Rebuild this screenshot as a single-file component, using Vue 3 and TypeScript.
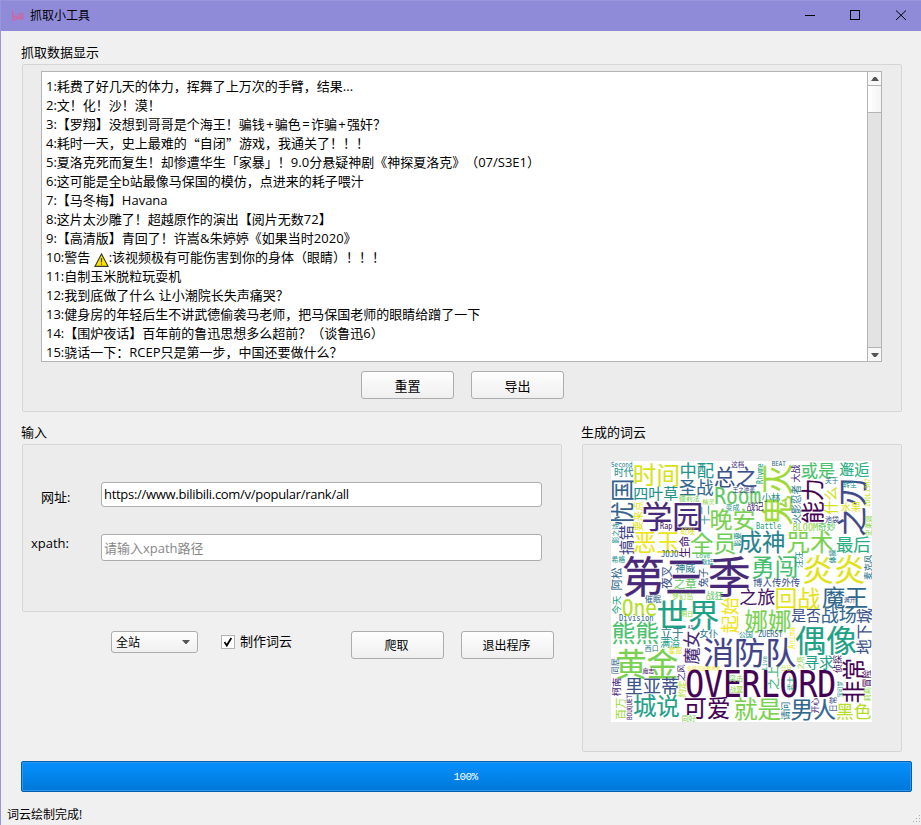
<script setup lang="ts">
import { ref } from 'vue'

interface Row {
  text: string
  icon?: boolean
  tail?: string
}

const rows: Row[] = [
  { text: '1:耗费了好几天的体力，挥舞了上万次的手臂，结果...' },
  { text: '2:文！化！沙！漠！' },
  { text: '3:【罗翔】没想到哥哥是个海王！骗钱+骗色=诈骗+强奸？' },
  { text: '4:耗时一天，史上最难的“自闭”游戏，我通关了！！！' },
  { text: '5:夏洛克死而复生！却惨遭华生「家暴」！9.0分悬疑神剧《神探夏洛克》（07/S3E1）' },
  { text: '6:这可能是全b站最像马保国的模仿，点进来的耗子喂汁' },
  { text: '7:【马冬梅】Havana' },
  { text: '8:这片太沙雕了！超越原作的演出【阅片无数72】' },
  { text: '9:【高清版】青回了！许嵩&朱婷婷《如果当时2020》' },
  { text: '10:警告 ', icon: true, tail: ':该视频极有可能伤害到你的身体（眼睛）！！！' },
  { text: '11:自制玉米脱粒玩耍机' },
  { text: '12:我到底做了什么 让小潮院长失声痛哭？' },
  { text: '13:健身房的年轻后生不讲武德偷袭马老师，把马保国老师的眼睛给蹭了一下' },
  { text: '14:【围炉夜话】百年前的鲁迅思想多么超前？（谈鲁迅6）' },
  { text: '15:骁话一下：RCEP只是第一步，中国还要做什么？' },
]

// Quotes take a full-width cell; + = & take a wider one than the Latin font gives them.
const pieces = (text: string) =>
  text
    .split(/([“”+=&])/)
    .filter(Boolean)
    .map((part) => ({
      part,
      kind: /^[“”]$/.test(part) ? 'quote' : /^[+=&]$/.test(part) ? 'sign' : '',
    }))

const url = ref('https://www.bilibili.com/v/popular/rank/all')
const xpath = ref('')
const makeCloud = ref(true)

// [text, start along the writing direction, centre across it, length, colour, upright?]
type Entry = [string, number, number, number, string, boolean?]

const entries: Entry[] = [
  ['Second', 0, 3, 21.5, '#26828e'],
  ['时代', 3.3, 11.7, 18.7, '#26928a'],
  ['时间', 22.7, 14, 45.5, '#d8e219'],
  ['中配', 69, 9.3, 33.3, '#1f958b'],
  ['总之', 103.5, 16, 42, '#3b528b'],
  ['这档', 120.5, 4, 12.5, '#482878'],
  ['忧国', 63.3, 11, 45, '#34618d', true],
  ['四叶草', 22.7, 31.8, 44, '#21918c'],
  ['圣战', 68.7, 26.7, 33.3, '#31688e'],
  ['Room', 103.3, 34.8, 47, '#5ec962'],
  ['德莉法', 68, 37.3, 20.7, '#73d055'],
  ['精灵', 91.7, 40.7, 11.5, '#90d743'],
  ['变成', 114.7, 46, 13.5, '#21918c'],
  ['王之逆袭', 122, 28.5, 21.5, '#3e4a89'],
  ['学园', 31.3, 54.8, 60, '#482878'],
  ['要来点', 70, 26.7, 29.3, '#dfe318', true],
  ['搞错', 93.3, 15, 28.7, '#414487', true],
  ['影之诗', 82.3, 4, 20, '#21918c', true],
  ['Rap', 49, 65, 12.5, '#481467'],
  ['恶玉', 22.7, 80.7, 45.3, '#ece51b'],
  ['虹咲', 69.7, 70, 14.3, '#dfe318'],
  ['十二', 63.3, 94.7, 18.7, '#21918c', true],
  ['生命', 96.7, 73.7, 21.3, '#481467', true],
  ['晚安', 99.3, 58, 44.4, '#7ad151'],
  ['全员', 80, 82, 44.7, '#6ece58'],
  ['JOJO', 50, 93, 17.5, '#31688e'],
  ['Love', 84.7, 94.8, 14.5, '#35b779'],
  ['耿娃', 90.7, 100.3, 11.7, '#21918c'],
  ['希格', 0.7, 98.8, 13.3, '#21918c'],
  ['阿松', 129, 6, 22, '#31688e', true],
  ['第三季', 12.3, 116, 126, '#482878'],
  ['夜叉', 127.5, 55.7, 22.5, '#3b528b', true],
  ['神威', 64.7, 107.5, 19.3, '#2a788e'],
  ['之章', 63.3, 122.5, 22, '#5ec962'],
  ['兔子', 126, 92.7, 18.7, '#3b528b', true],
  ['影要', 85.5, 126, 14, '#21918c', true],
  ['Rhyme', 23, 148.7, 20.7, '#21a585', true],
  ['鬼灭', 64, 166, 60.5, '#a0da39', true],
  ['BEAT', 160.7, 2.7, 14, '#31688e'],
  ['大战', 21.3, 184.3, 17.3, '#482878', true],
  ['或是', 190.3, 9.3, 33.3, '#4ac16d'],
  ['邂逅', 228.7, 8.7, 29, '#28ae80'],
  ['火影忍者', 62.3, 185.3, 38.3, '#2a788e', true],
  ['能力', 62.3, 201.3, 44.3, '#440154', true],
  ['关于', 214.3, 19.7, 12.7, '#2a788e'],
  ['什么', 53.3, 220, 27.3, '#d2e21b', true],
  ['之刃', 74.7, 241, 58, '#3e4a89', true],
  ['转生', 232.3, 23.7, 13.3, '#21918c'],
  ['IDOLiSH7', 45.7, 257, 28.3, '#c8e020', true],
  ['小林', 151, 36.3, 18, '#21918c'],
  ['战记', 135.7, 46, 16.7, '#482878'],
  ['水果', 230.3, 46.3, 19.3, '#dfe318'],
  ['池袋', 214.3, 58, 13.3, '#3b528b'],
  ['Battle', 145, 65.3, 25.3, '#1fa187'],
  ['BLOOM', 181.7, 66, 25.3, '#90d743'],
  ['奇妙', 207, 66, 17.3, '#5ec962'],
  ['史莱姆', 74.7, 257.3, 20, '#90d743', true],
  ['成神', 128.3, 81, 45.3, '#26828e'],
  ['咒术', 176.3, 80.7, 45.3, '#7ad151'],
  ['最后', 225.7, 83.7, 33.3, '#28ae80'],
  ['勇闯', 141, 106, 45.3, '#44bf70'],
  ['汪汪', 106.7, 188.3, 16, '#21918c', true],
  ['炎炎', 192.3, 109, 60.7, '#dfe318'],
  ['体操', 102.3, 221, 13.7, '#21918c', true],
  ['麦克风', 118.7, 256.3, 24.7, '#2a788e', true],
  ['博人传外传', 142.3, 121.7, 46.7, '#3b528b'],
  ['催眠', 34, 137.7, 16, '#31688e'],
  ['今天', 153, 5.7, 18, '#21a585', true],
  ['One', 10.7, 146.7, 35.3, '#b5de2b'],
  ['梦幻岛', 61.3, 135, 20.7, '#90d743'],
  ['战狂', 95, 134.3, 17, '#5ec962'],
  ['世界', 46.7, 154, 60.7, '#1fa187'],
  ['起始', 171.7, 119.3, 34.7, '#f1e51d', true],
  ['Division', 8, 157, 34.7, '#31688e'],
  ['明日', 70, 152.7, 12, '#90d743'],
  ['熊熊', 1.3, 172.3, 46, '#4ac16d'],
  ['立于', 50, 171.3, 22, '#2a788e'],
  ['满溢', 49.3, 181.7, 19.3, '#1fa187'],
  ['女仆', 88.7, 172, 18, '#2a788e'],
  ['A3', 76.7, 166, 5.3, '#3b528b'],
  ['魔女', 203, 80.3, 32.7, '#482878', true],
  ['消防队', 93, 190.8, 91.3, '#414487'],
  ['西口', 34, 187.3, 13.3, '#2a788e'],
  ['星愿', 58, 189.3, 13.3, '#dfe318'],
  ['黄金', 5.3, 202.7, 60.7, '#7ad151'],
  ['同居', 213, 4.3, 15.3, '#31688e', true],
  ['魔志', 31.7, 209.3, 11.3, '#481467'],
  ['之风', 219.7, 70.3, 16, '#482878', true],
  ['冬组首班继承者', 76, 207, 34, '#fde725'],
  ['柯南', 235, 5, 18, '#482878', true],
  ['里亚蒂', 14.7, 225, 52.7, '#3b528b'],
  ['约定', 236.3, 71.3, 16, '#b5de2b', true],
  ['OVERLORD', 74.2, 222.8, 151, '#440154'],
  ['突击', 118, 217, 14, '#7ad151'],
  ['战翼', 118.7, 228, 13, '#90d743'],
  ['百万', 258.3, 10.3, 21.3, '#a0da39', true],
  ['BOUQUET', 259, 18.7, 25.3, '#482878', true],
  ['城说', 22.7, 245, 45.3, '#1fa187'],
  ['可爱', 73.3, 247.3, 45.3, '#440154'],
  ['同好', 70.7, 257, 14, '#7ad151'],
  ['就是', 123.5, 248.3, 46, '#7ad151'],
  ['之旅', 129, 135.7, 34.7, '#481467'],
  ['回战', 164.3, 137, 44, '#e5e419'],
  ['魔王', 211.7, 136.3, 44.7, '#31688e'],
  ['满开', 233, 139, 11.3, '#3b528b'],
  ['娜娜', 134.3, 159.7, 45.3, '#7ad151'],
  ['是否', 180.7, 154.7, 28.7, '#3b528b'],
  ['战场', 210.3, 154.3, 34.7, '#31688e'],
  ['地下城', 193, 253, 45, '#3b528b', true],
  ['公国', 128, 173, 13.7, '#21918c'],
  ['ZUERST', 147, 172.7, 24.7, '#31688e'],
  ['Anima', 188, 181, 22, '#fde725', true],
  ['偶像', 185, 179, 60, '#1fa187'],
  ['之上', 228.3, 162.3, 23.3, '#35b779', true],
  ['Live', 209, 154, 14, '#1fa187', true],
  ['日日', 170.3, 206.7, 10, '#b5de2b'],
  ['之塔', 208.3, 189.7, 12.7, '#90d743', true],
  ['寻求', 193.7, 201, 28.7, '#1fa187'],
  ['侦探', 211.7, 227, 17.3, '#481467', true],
  ['非常', 241.7, 242.3, 44, '#440154', true],
  ['冒险', 226.3, 256, 17.3, '#440154', true],
  ['武士', 229.7, 179, 14, '#1fa187', true],
  ['男人', 180.3, 248.7, 44, '#31688e'],
  ['请问', 259, 174, 18, '#2a788e', true],
  ['开心', 252.3, 204.3, 15.3, '#482878', true],
  ['日常', 251, 222.3, 15.3, '#3b528b', true],
  ['宝可梦', 236.3, 228.7, 16, '#21918c', true],
  ['莉莉', 240.3, 256.3, 14, '#90d743', true],
  ['黑色', 225.7, 250.3, 34, '#b5de2b'],
]

const words = entries.map(([text, start, centre, length, fill, upright]) => {
  const latin = /^[\x20-\x7e]+$/.test(text)
  const size = latin ? (length * 2) / text.length : length / (text.length - 0.07)
  const lead = latin ? 0 : size * 0.035
  const drop = size * (latin ? 0.35 : 0.38)
  const x = upright ? centre + drop : start - lead
  const y = upright ? start + lead : centre + drop
  return {
    text,
    fill,
    size,
    weight: size * 0.006,
    span: latin ? length : size * text.length,
    move: `translate(${x.toFixed(2)} ${y.toFixed(2)})${upright ? ' rotate(-90)' : ''}`,
  }
})
</script>

<template>
  <div class="window">
    <header class="titlebar">
      <svg class="logo" width="13" height="12" viewBox="0 0 13 12">
        <path d="M1.500 0.500L2 10l3.500-1.200L5.200 6 2 6.500M7 4v1M7 6.500v3M8.600 2.500v7M10.200 4v1M10.200 6.500v3M11.700 3v6.500" />
      </svg>
      <span class="title">抓取小工具</span>
      <svg class="controls" width="138" height="31" viewBox="0 0 138 31" shape-rendering="crispEdges">
        <path d="M22 15.500h10M67.500 10.500h9v9h-9z" />
        <path d="M113 10.500l10 9.500M123 10.500l-10 9.500" shape-rendering="auto" />
      </svg>
    </header>

    <main class="content">
      <section class="data">
        <h2 class="caption">抓取数据显示</h2>
        <div class="group">
          <div class="listbox">
            <ul class="list">
              <li v-for="(row, i) in rows" :key="i">
                <span v-for="(p, j) in pieces(row.text)" :key="j" :class="p.kind">{{ p.part }}</span>
                <svg v-if="row.icon" class="warn" width="15" height="14" viewBox="0 0 15 14">
                  <path d="M7.500 1L14 13.300H1z" fill="#ffe600" stroke="#3c3c28" stroke-width="1.200" />
                  <path d="M7.500 5v4.500M7.500 10.500v1.300" stroke="#4a4200" stroke-width="1.200" />
                </svg>
                <span v-if="row.tail">{{ row.tail }}</span>
              </li>
            </ul>
            <div class="scrollbar">
              <div class="step"><svg width="8" height="4"><path d="M0 4h8L5 0H3z" /></svg></div>
              <div class="handle"></div>
              <div class="track"></div>
              <div class="step last"><svg width="8" height="4"><path d="M0 0h8L5 4H3z" /></svg></div>
            </div>
          </div>
          <div class="actions">
            <button class="btn">重置</button>
            <button class="btn">导出</button>
          </div>
        </div>
      </section>

      <div class="lower">
        <section class="left">
          <h2 class="caption">输入</h2>
          <div class="group form">
            <div class="field first">
              <label class="label">网址:</label>
              <input v-model="url" class="input" />
            </div>
            <div class="field second">
              <label class="label">xpath:</label>
              <input v-model="xpath" class="input" placeholder="请输入xpath路径" />
            </div>
          </div>
          <div class="toolbar">
            <div class="combo">
              <span>全站</span>
              <svg width="8" height="4"><path d="M0 0h8L4.500 4h-1z" /></svg>
            </div>
            <label class="check" @click="makeCloud = !makeCloud">
              <span class="box">
                <svg v-if="makeCloud" width="12" height="12" viewBox="0 0 12 12">
                  <path d="M2.500 6l2.300 3.500L9.300 2" />
                </svg>
              </span>
              <span>制作词云</span>
            </label>
            <button class="btn small">爬取</button>
            <button class="btn small">退出程序</button>
          </div>
        </section>

        <section class="right">
          <h2 class="caption">生成的词云</h2>
          <div class="group cloudbox">
            <svg class="cloud" width="261" height="261" viewBox="0 0 261 261">
              <text
                v-for="(w, i) in words"
                :key="i"
                :transform="w.move"
                :fill="w.fill"
                :stroke="w.fill"
                :stroke-width="w.weight"
                :font-size="w.size"
                :textLength="w.span"
                lengthAdjust="spacingAndGlyphs"
              >{{ w.text }}</text>
            </svg>
          </div>
        </section>
      </div>

      <div class="progress">100%</div>
    </main>

    <footer class="status">
      <span>词云绘制完成!</span>
      <svg class="grip" width="8" height="8" shape-rendering="crispEdges">
        <path d="M6 0h1v1h-1zM3 3h1v1h-1zM6 3h1v1h-1zM0 6h1v1h-1zM3 6h1v1h-1zM6 6h1v1h-1z" />
      </svg>
    </footer>
  </div>
</template>

<style>
body {
  background: #f0f0f0;
  overflow: hidden;
}
</style>

<style scoped>
.window {
  box-sizing: border-box;
  width: 921px;
  height: 825px;
  display: flex;
  flex-direction: column;
  background: #f0f0f0;
  border-left: 1px solid #9b95dd;
  color: #000;
  font: 13px/19px 'Open Sans', 'Noto Sans CJK SC', sans-serif;
  text-spacing-trim: space-all;
  font-kerning: none;
  overflow: hidden;
}
.titlebar {
  height: 31px;
  flex: none;
  display: flex;
  align-items: center;
  box-sizing: border-box;
  padding-left: 10px;
  margin-left: -1px;
  background: #8f8bd8;
  border-top: 1px solid #9b95dd;
}
.logo {
  margin: 0 7px 1px 1px;
}
.logo path {
  fill: none;
  stroke: #d0649f;
  stroke-width: 1.3;
}
.title {
  font-size: 12px;
  margin: -2px 0 0 -1px;
}
.controls {
  margin: -1px 0 0 auto;
}
.controls path {
  fill: none;
  stroke: #000;
}
.content {
  flex: 1;
  padding: 11px 0 0 20px;
}
.caption {
  box-sizing: border-box;
  margin: 0;
  height: 22px;
  padding-top: 1px;
  font-size: 13px;
  line-height: 19px;
  font-weight: 400;
}
.group {
  box-sizing: border-box;
  margin-left: 1px;
  border: 1px solid #d6d6d6;
  border-radius: 2px;
  background: #ececec;
}
.data .group {
  width: 880px;
  height: 348px;
  padding: 6px 0 0 18px;
}
.listbox {
  box-sizing: border-box;
  width: 841px;
  height: 291px;
  display: flex;
  background: #fff;
  border: 1px solid #b4b4b4;
}
.list {
  flex: 1;
  margin: 0;
  padding: 5px 0 0 4px;
  list-style: none;
  overflow: hidden;
}
.list li {
  height: 19px;
  display: flex;
  white-space: pre;
}
.quote {
  width: 13px;
  font-family: 'Noto Sans CJK SC', sans-serif;
  text-align: center;
}
.sign {
  width: 10px;
  text-align: center;
}
.warn {
  margin: 5px 0 0;
}
.scrollbar {
  width: 13px;
  border-left: 1px solid #b4b4b4;
  display: flex;
  flex-direction: column;
}
.step {
  height: 13px;
  display: flex;
  align-items: center;
  justify-content: center;
  background: #f8f8f8;
  border-bottom: 1px solid #b4b4b4;
}
.step.last {
  border-bottom: 0;
  border-top: 1px solid #b4b4b4;
}
.step path,
.combo path {
  fill: #555;
}
.handle {
  height: 26px;
  background: linear-gradient(90deg, #fff, #f4f4f4);
  border-bottom: 1px solid #b4b4b4;
}
.track {
  flex: 1;
  background: #e3e3e3;
}
.actions {
  display: flex;
  gap: 17px;
  padding: 9px 0 0 320px;
}
.btn {
  box-sizing: border-box;
  width: 93px;
  height: 28px;
  padding: 1px 0 0;
  border: 1px solid #adadad;
  border-radius: 3px;
  background: linear-gradient(#fefefe, #efefef);
  color: #000;
  font: inherit;
  line-height: 20px;
}
.btn.small {
  font-size: 12px;
  padding: 1px 2px 0 0;
}
.lower {
  display: flex;
  gap: 19px;
  padding-top: 10px;
}
.left {
  width: 541px;
}
.form {
  height: 168px;
  padding-top: 37px;
}
.field {
  display: flex;
}
.label {
  flex: none;
}
.input {
  box-sizing: border-box;
  width: 441px;
  height: 25px;
  padding: 0 2px;
  border: 1px solid #adadad;
  border-radius: 3px;
  background: #fff;
  color: #000;
  font: inherit;
  outline: none;
}
.input::placeholder {
  color: #888;
  opacity: 1;
}
.first .label {
  width: 60px;
  height: 19px;
  padding: 6px 0 0 18px;
}
.first .input {
  padding-bottom: 2px;
  letter-spacing: -0.29px;
}
.second {
  margin-top: 27px;
}
.second .label {
  width: 70px;
  padding-left: 8px;
}
.second .input {
  height: 27px;
}
.toolbar {
  display: flex;
  align-items: flex-start;
  padding: 19px 0 0 90px;
}
.combo {
  box-sizing: border-box;
  width: 87px;
  height: 22px;
  display: flex;
  align-items: center;
  justify-content: space-between;
  padding: 0 7px 0 4px;
  border: 1px solid #adadad;
  border-radius: 3px;
  background: linear-gradient(#fefefe, #efefef);
  font-size: 12px;
}
.check {
  display: flex;
  align-items: center;
  gap: 5px;
  width: 130px;
  height: 21px;
  margin-left: 23px;
}
.box {
  box-sizing: border-box;
  width: 14px;
  height: 14px;
  border: 1px solid #b4b4b4;
  background: #fff;
  display: flex;
}
.box path {
  fill: none;
  stroke: #000;
  stroke-width: 1.8;
}
.toolbar .btn + .btn {
  margin-left: 17px;
}
.cloudbox {
  width: 320px;
  height: 308px;
  padding: 16px 0 0 28px;
}
.cloud {
  display: block;
  background: #fff;
  font-family: 'DejaVu Sans Mono', 'Noto Sans CJK SC', sans-serif;
}
.progress {
  box-sizing: border-box;
  width: 891px;
  height: 31px;
  margin-top: 9px;
  padding-right: 2px;
  border: 1px solid #0060ae;
  border-radius: 2px;
  box-shadow: inset 0 0 0 1px #2b96ee;
  background: linear-gradient(#0590ff, #0078d7);
  color: #fff;
  font: 11px/30px 'Liberation Mono', monospace;
  letter-spacing: -0.6px;
  text-align: center;
}
.status {
  height: 21px;
  flex: none;
  display: flex;
  justify-content: space-between;
  padding-left: 6px;
  font-size: 12px;
  line-height: 21px;
}
.grip {
  align-self: flex-end;
  margin: 0 0 2px;
}
.grip path {
  fill: #aaa;
}
</style>
